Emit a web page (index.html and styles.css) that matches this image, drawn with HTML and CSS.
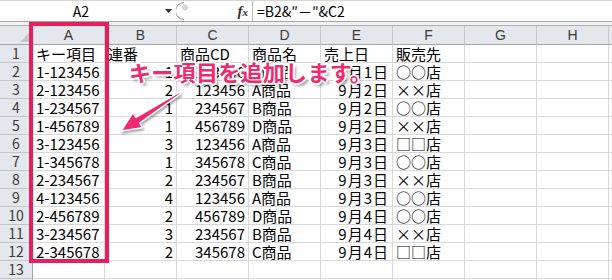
FILE: index.html
```html
<!DOCTYPE html>
<html lang="ja">
<head>
    <meta charset="UTF-8">
    <title>キー項目</title>
    <link rel="stylesheet" href="styles.css">
</head>
<body>
    <div class="sheet">
        <div class="formula-bar">
            <div class="name-box">A2</div>
            <div class="name-drop">
                <svg width="8" height="5" viewBox="0 0 8 5"><path d="M0 0h7L3.5 4z" fill="#333"/></svg>
            </div>
            <div class="grip">
                <svg width="16" height="20" viewBox="0 0 16 20">
                    <path d="M8 1.5A8.5 8.5 0 0 0 8 18.5" fill="none" stroke="#9a9a9a"/>
                    <circle cx="9" cy="6.5" r="3" fill="#d6d6d6"/>
                </svg>
            </div>
            <div class="fx"><i>f</i><span>x</span></div>
            <div class="formula">=B2&amp;″－″&amp;C2</div>
        </div>
        <div class="bar-gap"></div>

        <div class="grid">
            <div class="row head">
                <div class="corner"><span class="tri"></span></div>
                <div class="ch">A</div><div class="ch">B</div><div class="ch">C</div><div class="ch">D</div>
                <div class="ch">E</div><div class="ch">F</div><div class="ch">G</div><div class="ch">H</div><div class="ch">I</div>
            </div>
            <div class="row">
                <div class="rh">1</div>
                <div class="c">キー項目</div><div class="c">連番</div><div class="c">商品CD</div><div class="c">商品名</div>
                <div class="c">売上日</div><div class="c">販売先</div><div class="c"></div><div class="c"></div><div class="c"></div>
            </div>
            <div class="row">
                <div class="rh">2</div>
                <div class="c">1-123456</div><div class="c n">1</div><div class="c n">123456</div><div class="c">A商品</div>
                <div class="c n d">9月1日</div><div class="c s">○○店</div><div class="c"></div><div class="c"></div><div class="c"></div>
            </div>
            <div class="row">
                <div class="rh">3</div>
                <div class="c">2-123456</div><div class="c n">2</div><div class="c n">123456</div><div class="c">A商品</div>
                <div class="c n d">9月2日</div><div class="c s">××店</div><div class="c"></div><div class="c"></div><div class="c"></div>
            </div>
            <div class="row">
                <div class="rh">4</div>
                <div class="c">1-234567</div><div class="c n">1</div><div class="c n">234567</div><div class="c">B商品</div>
                <div class="c n d">9月2日</div><div class="c s">○○店</div><div class="c"></div><div class="c"></div><div class="c"></div>
            </div>
            <div class="row">
                <div class="rh">5</div>
                <div class="c">1-456789</div><div class="c n">1</div><div class="c n">456789</div><div class="c">D商品</div>
                <div class="c n d">9月2日</div><div class="c s">××店</div><div class="c"></div><div class="c"></div><div class="c"></div>
            </div>
            <div class="row">
                <div class="rh">6</div>
                <div class="c">3-123456</div><div class="c n">3</div><div class="c n">123456</div><div class="c">A商品</div>
                <div class="c n d">9月3日</div><div class="c s">□□店</div><div class="c"></div><div class="c"></div><div class="c"></div>
            </div>
            <div class="row">
                <div class="rh">7</div>
                <div class="c">1-345678</div><div class="c n">1</div><div class="c n">345678</div><div class="c">C商品</div>
                <div class="c n d">9月3日</div><div class="c s">○○店</div><div class="c"></div><div class="c"></div><div class="c"></div>
            </div>
            <div class="row">
                <div class="rh">8</div>
                <div class="c">2-234567</div><div class="c n">2</div><div class="c n">234567</div><div class="c">B商品</div>
                <div class="c n d">9月3日</div><div class="c s">××店</div><div class="c"></div><div class="c"></div><div class="c"></div>
            </div>
            <div class="row">
                <div class="rh">9</div>
                <div class="c">4-123456</div><div class="c n">4</div><div class="c n">123456</div><div class="c">A商品</div>
                <div class="c n d">9月3日</div><div class="c s">○○店</div><div class="c"></div><div class="c"></div><div class="c"></div>
            </div>
            <div class="row">
                <div class="rh">10</div>
                <div class="c">2-456789</div><div class="c n">2</div><div class="c n">456789</div><div class="c">D商品</div>
                <div class="c n d">9月4日</div><div class="c s">○○店</div><div class="c"></div><div class="c"></div><div class="c"></div>
            </div>
            <div class="row">
                <div class="rh">11</div>
                <div class="c">3-234567</div><div class="c n">3</div><div class="c n">234567</div><div class="c">B商品</div>
                <div class="c n d">9月4日</div><div class="c s">××店</div><div class="c"></div><div class="c"></div><div class="c"></div>
            </div>
            <div class="row">
                <div class="rh">12</div>
                <div class="c">2-345678</div><div class="c n">2</div><div class="c n">345678</div><div class="c">C商品</div>
                <div class="c n d">9月4日</div><div class="c s">□□店</div><div class="c"></div><div class="c"></div><div class="c"></div>
            </div>
            <div class="row">
                <div class="rh">13</div>
                <div class="c"></div><div class="c"></div><div class="c"></div><div class="c"></div>
                <div class="c"></div><div class="c"></div><div class="c"></div><div class="c"></div><div class="c"></div>
            </div>
            <div class="row">
                <div class="rh">14</div>
                <div class="c"></div><div class="c"></div><div class="c"></div><div class="c"></div>
                <div class="c"></div><div class="c"></div><div class="c"></div><div class="c"></div><div class="c"></div>
            </div>
        </div>

        <!-- annotation on top of the sheet -->
        <div class="highlight"></div>
        <svg class="arrow" width="80" height="60" viewBox="110 85 80 60">
            <polygon points="121,131 142.7,127.8 139.7,123.1 180.5,93.8 179.5,92.2 135.9,117.3 133,112.6" fill="#ef2a6f" stroke="#fff" stroke-width="1.5" stroke-linejoin="round"/>
        </svg>
        <div class="callout">キー項目を追加します。</div>
    </div>
</body>
</html>
```

FILE: styles.css
```css
body {
    margin: 0;
    background: #fff;
}

.sheet {
    position: relative;
    width: 612px;
    height: 280px;
    overflow: hidden;
    font-family: "Noto Sans CJK JP", "Liberation Sans", sans-serif;
}

/* name box + formula bar */
.formula-bar {
    display: flex;
    height: 20px;
    border-top: 1px solid #d4d4d4;
    border-bottom: 1px solid #a5a5a5;
    background: #fff;
}
.name-box {
    width: 162px;
    text-align: center;
    font-size: 14px;
    line-height: 20px;
    color: #000;
}
.name-drop {
    width: 14px;
    display: flex;
    align-items: center;
    justify-content: center;
}
.grip {
    width: 16px;
}
.fx {
    width: 61px;
    border-right: 1px solid #b9b9b9;
    text-align: right;
    padding-right: 4px;
    box-sizing: border-box;
    font-family: "Liberation Serif", serif;
    font-size: 15px;
    line-height: 20px;
    font-weight: bold;
    color: #333;
}
.fx i {
    font-style: italic;
}
.fx span {
    font-style: italic;
    font-size: 11px;
}
.formula {
    flex: 1;
    padding-left: 4px;
    font-size: 14px;
    line-height: 20px;
    white-space: nowrap;
}
.bar-gap {
    height: 3px;
    background: #f1f2f4;
}

/* sheet grid */
.row {
    display: grid;
    grid-template-columns: 33px repeat(9, 72px);
    height: 18px;
}
.row > div {
    box-sizing: border-box;
    border-right: 1px solid #d8d8d8;
    border-bottom: 1px solid #d8d8d8;
    overflow: hidden;
    white-space: nowrap;
}
.row.head {
    height: 20px;
}
.row.head > div {
    border-top: 1px solid #a9aeb5;
    border-bottom: 1px solid #9ea4ab;
    border-right: 1px solid #c3c7cd;
    background: #e4e7ec;
}
.corner {
    position: relative;
}
.tri {
    position: absolute;
    right: 2px;
    bottom: 2px;
    width: 0;
    height: 0;
    border-left: 10px solid transparent;
    border-bottom: 10px solid #c2c6cc;
}
.ch {
    text-align: center;
    font-family: "Liberation Sans", sans-serif;
    font-size: 14px;
    line-height: 18px;
    color: #3b3b3b;
}
.row > .rh {
    background: #e4e7ec;
    border-right: 1px solid #9ea4ab;
    border-bottom: 1px solid #c3c7cd;
    text-align: center;
    font-size: 14px;
    line-height: 17px;
    color: #3b3b3b;
}
.c {
    padding: 0 3px;
    font-size: 15px;
    line-height: 17px;
    color: #000;
}
.c.n {
    text-align: right;
}
.c.d {
    letter-spacing: 1px;
}
.c.s {
    font-feature-settings: "fwid";
}

/* annotation overlay */
.highlight {
    position: absolute;
    left: 29px;
    top: 22px;
    width: 80px;
    height: 241px;
    box-sizing: border-box;
    border: 4px solid #ea1d5c;
}
.arrow {
    position: absolute;
    left: 110px;
    top: 85px;
    filter: drop-shadow(1px 2px 1px rgba(0, 0, 0, 0.35));
}
.callout {
    position: absolute;
    left: 129px;
    top: 57px;
    font-size: 22px;
    font-weight: bold;
    line-height: 29px;
    letter-spacing: 0.3px;
    color: #ef2a6f;
    white-space: nowrap;
    text-shadow:
        -2px 0 0 #fff, 2px 0 0 #fff, 0 -2px 0 #fff, 0 2px 0 #fff,
        -1px -1px 0 #fff, 1px 1px 0 #fff, -1px 1px 0 #fff, 1px -1px 0 #fff,
        3px 3px 3px rgba(0, 0, 0, 0.4);
}
```
